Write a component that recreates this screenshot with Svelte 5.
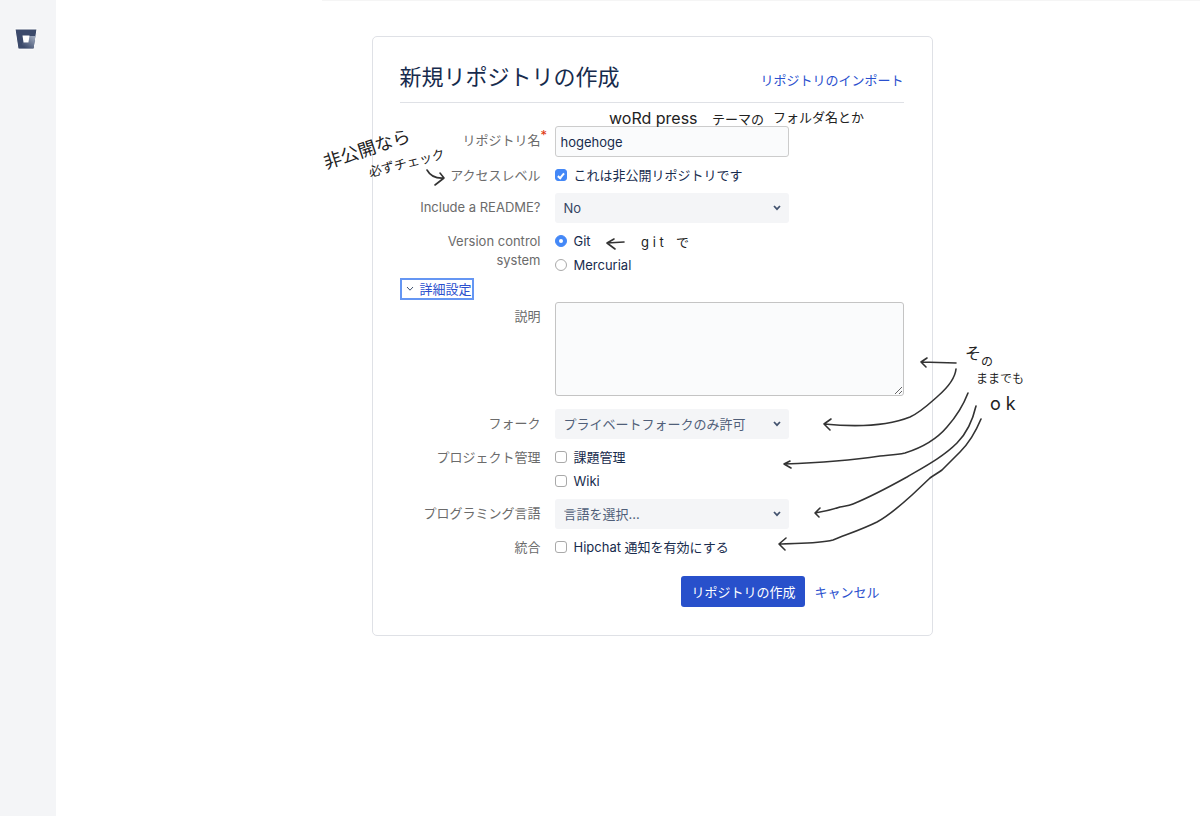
<script>
  let name = $state('hogehoge');
  let isPrivate = $state(true);
  let readme = $state('no');
  let scm = $state('git');
  let advanced = $state(true);
  let description = $state('');
  let forks = $state('private');
  let language = $state('');

  // freehand arrows: a curve and its head
  const arrows = [
    'M427 170 Q432 179 444 178 M440 173 L444 178 L435 185',
    'M624 242 L607 243 M614 239 L607 243 L615 249',
    'M956 363 L921 362 M927 358 L921 362 L926 367',
    'M956 369 C955 379 946 389 938 396 S921 412 910 417 C885 427 855 427 824 424 M831 419 L824 424 L830 430',
    'M968 393 C963 406 955 418 947 427 C936 440 921 448 905 453 C896 455 889 455 880 456 Q840 462 784 464 M790 461 L784 464 L791 468',
    'M976 406 C973 419 967 433 957 443 C943 457 924 467 907 477 C889 487 870 497 853 504 C848 506 844 506 840 507 Q828 511 815 513 M820 508 L815 513 L819 517',
    'M981 419 C976 431 969 443 960 452 L942 470 C938 473 934 475 930 478 L912 495 C901 505 890 515 877 522 C863 529 848 534 833 540 C817 544 797 543 779 544 M786 538 L779 544 L785 550',
  ];

  const handleSubmit = (e) => {
    e.preventDefault();
  }
</script>

{#snippet chevron()}
  <svg class="chevron" viewBox="0 0 8 6" aria-hidden="true"><path d="M1 1 L4 4.2 L7 1" /></svg>
{/snippet}

<div class="page">
  <nav class="sidebar">
    <a href="#home" aria-label="Bitbucket">
      <svg class="logo" viewBox="0 0 24 22">
        <defs>
          <linearGradient id="shade" x1="1" y1="0.2" x2="0.3" y2="0.9">
            <stop offset="0" stop-color="#9aa5ba" />
            <stop offset="1" stop-color="#3c4a6b" />
          </linearGradient>
        </defs>
        <path d="M1 1 H23 L20 21 H4 Z" fill="#3c4a6b" stroke="#fff" stroke-width="1" />
        <path d="M14.500 8 H21.500 L19.600 20.300 H5 L9 14.500 H14.500 Z" fill="url(#shade)" />
        <path d="M8.500 7.500 H15.500 L14.500 14.500 H9.500 Z" fill="#fff" />
      </svg>
    </a>
  </nav>

  <main>
    <div class="topline"></div>
    <section class="card">
      <header>
        <h1>新規リポジトリの作成</h1>
        <a href="#import">リポジトリのインポート</a>
      </header>

      <form onsubmit={handleSubmit}>
        <div class="group">
          <div class="row">
            <label class="label" for="name">リポジトリ名<span class="required">*</span></label>
            <input id="name" class="text" type="text" bind:value={name}>
          </div>
          <div class="row checks">
            <span class="label">アクセスレベル</span>
            <div class="options">
              <label><input type="checkbox" bind:checked={isPrivate}>これは非公開リポジトリです</label>
            </div>
          </div>
          <div class="row">
            <label class="label" for="readme">Include a README?</label>
            <div class="select">
              <select id="readme" bind:value={readme}>
                <option value="no">No</option>
              </select>
              {@render chevron()}
            </div>
          </div>
          <div class="row checks">
            <span class="label">Version control system</span>
            <div class="options">
              <label><input type="radio" name="scm" value="git" bind:group={scm}>Git</label>
              <label><input type="radio" name="scm" value="hg" bind:group={scm}>Mercurial</label>
            </div>
          </div>
        </div>

        <button type="button" class="toggle" aria-expanded={advanced} onclick={() => advanced = !advanced}>
          {@render chevron()}詳細設定
        </button>

        {#if advanced}
          <div class="group">
            <div class="row tall">
              <label class="label" for="description">説明</label>
              <textarea id="description" bind:value={description}></textarea>
            </div>
            <div class="row">
              <label class="label" for="forks">フォーク</label>
              <div class="select muted">
                <select id="forks" bind:value={forks}>
                  <option value="private">プライベートフォークのみ許可</option>
                </select>
                {@render chevron()}
              </div>
            </div>
            <div class="row checks">
              <span class="label">プロジェクト管理</span>
              <div class="options">
                <label><input type="checkbox">課題管理</label>
                <label><input type="checkbox">Wiki</label>
              </div>
            </div>
            <div class="row">
              <label class="label" for="language">プログラミング言語</label>
              <div class="select muted">
                <select id="language" bind:value={language}>
                  <option value="">言語を選択...</option>
                </select>
                {@render chevron()}
              </div>
            </div>
            <div class="row checks">
              <span class="label">統合</span>
              <div class="options">
                <label><input type="checkbox">Hipchat 通知を有効にする</label>
              </div>
            </div>
          </div>
        {/if}

        <div class="buttons">
          <button type="submit" class="primary">リポジトリの作成</button>
          <a href="#cancel">キャンセル</a>
        </div>
      </form>

      <!-- handwritten notes laid over the form -->
      <svg class="notes" viewBox="320 100 710 460">
        {#each arrows as d}
          <path {d} />
        {/each}
        <text class="big" transform="translate(326 169) rotate(-18)">非公開なら</text>
        <text transform="translate(370 177) rotate(-14)">必ずチェック</text>
        <text class="latin" x="609" y="124">woRd press</text>
        <text x="712" y="124">テーマの</text>
        <text x="773" y="122">フォルダ名とか</text>
        <text x="641" y="247">g i t</text>
        <text x="676" y="247">で</text>
        <text class="latin" x="965" y="359">そ</text>
        <text class="small" x="981" y="366">の</text>
        <text class="small" x="976" y="383">ままでも</text>
        <text class="big" x="990" y="410">o k</text>
      </svg>
    </section>
  </main>
</div>

<style>
  :global(body) {
    margin: 0;
    background: #fff;
  }

  .page {
    display: flex;
    min-height: 100vh;
    font-family: Inter, "Noto Sans CJK JP", sans-serif;
    font-size: 13px;
    line-height: 18px;
    color: #172b4d;
  }

  .page :is(input, select, textarea, button) {
    box-sizing: border-box;
    margin: 0;
    font: inherit;
    color: inherit;
  }

  a {
    color: #2a4fce;
    text-decoration: none;
  }

  .sidebar {
    flex: 0 0 56px;
    box-sizing: border-box;
    padding: 28px 14px;
    background: #f4f5f7;
  }

  .logo {
    display: block;
    width: 24px;
    height: 22px;
  }

  main {
    flex: 1;
    padding-left: 48px;
  }

  .topline {
    height: 1px;
    margin: 0 0 35px 218px;
    background: #f5f5f5;
  }

  .card {
    position: relative;
    box-sizing: border-box;
    max-width: 561px;
    margin: 0 auto;
    padding: 26px 28px 28px 27px;
    border: 1px solid #dfe1e6;
    border-radius: 5px;
  }

  header {
    display: flex;
    align-items: baseline;
    justify-content: space-between;
    padding-bottom: 11px;
    border-bottom: 1px solid #dfe1e6;
  }

  h1 {
    margin: 0;
    font-size: 22px;
    font-weight: 400;
    line-height: 28px;
  }

  form {
    margin-top: 23px;
  }

  .group {
    display: flex;
    flex-direction: column;
    gap: 6px;
  }

  .row {
    display: grid;
    grid-template-columns: 141px 1fr;
    column-gap: 14px;
    align-items: start;
  }

  .label {
    position: relative;
    padding-top: 5px;
    line-height: 19px;
    text-align: right;
    color: #6b6b6b;
  }

  .checks .label {
    padding-top: 3px;
    padding-left: 30px;
  }

  .required {
    position: absolute;
    top: 0;
    left: 100%;
    color: #de350b;
  }

  .text, .select {
    width: 234px;
  }

  .page .text {
    height: 31px;
    padding: 0 5px;
    border: 1px solid #ccc;
    border-radius: 3px;
    background: #fafbfc;
  }

  .tall {
    margin-bottom: 7px;
  }

  textarea {
    display: block;
    width: 100%;
    height: 94px;
    border: 1px solid #c4c4c4;
    border-radius: 3px;
    background: #fafbfc;
    resize: both;
  }

  .select {
    position: relative;
    color: #344563;
  }

  .muted {
    color: #505f79;
  }

  .page select {
    appearance: none;
    display: block;
    width: 100%;
    height: 30px;
    padding: 0 28px 0 9px;
    border: 0;
    border-radius: 3px;
    background: #f4f5f7;
  }

  .chevron {
    width: 8px;
    height: 6px;
    fill: none;
    stroke: #42526e;
    stroke-width: 1.7;
  }

  .select .chevron {
    position: absolute;
    top: 12px;
    right: 8px;
    pointer-events: none;
  }

  .options label {
    display: flex;
    align-items: center;
    gap: 7px;
    height: 24px;
  }

  .options input {
    appearance: none;
    display: grid;
    place-items: center;
    width: 12px;
    height: 12px;
    border: 1px solid #a9a9a9;
    border-radius: 3px;
    background: #fff;
  }

  .options input[type='radio'] {
    border-radius: 50%;
  }

  .options input:checked {
    border-color: #4488f7;
    background: #4488f7;
  }

  .options input::after {
    content: '';
  }

  .options input[type='checkbox']:checked::after {
    width: 2px;
    height: 5px;
    border: solid #fff;
    border-width: 0 2px 2px 0;
    transform: rotate(40deg);
  }

  .options input[type='radio']:checked::after {
    width: 4px;
    height: 4px;
    border-radius: 50%;
    background: #fff;
  }

  .page .toggle {
    display: flex;
    align-items: center;
    gap: 6px;
    height: 22px;
    margin: 1px 0 2px;
    padding: 0 0 0 4px;
    border: 2px solid #6596f3;
    background: none;
    color: #2a4fce;
  }

  .toggle .chevron {
    stroke-width: 1;
  }

  .buttons {
    display: flex;
    align-items: center;
    justify-content: flex-end;
    gap: 9px;
    margin-top: 17px;
    padding-right: 24px;
  }

  .page .primary {
    height: 31px;
    padding: 0 10px;
    border: 0;
    border-radius: 3px;
    background: #2850cb;
    color: #fff;
  }

  .notes {
    position: absolute;
    top: 63px;
    left: -53px;
    width: 710px;
    height: 460px;
    pointer-events: none;
  }

  .notes path {
    fill: none;
    stroke: #333;
    stroke-width: 1.6;
    stroke-linecap: round;
    stroke-linejoin: round;
  }

  .notes text {
    font-size: 13px;
    fill: #222;
  }

  .notes .latin {
    font-size: 16px;
  }

  .notes .big {
    font-size: 18px;
  }

  .notes .small {
    font-size: 12px;
  }
</style>
